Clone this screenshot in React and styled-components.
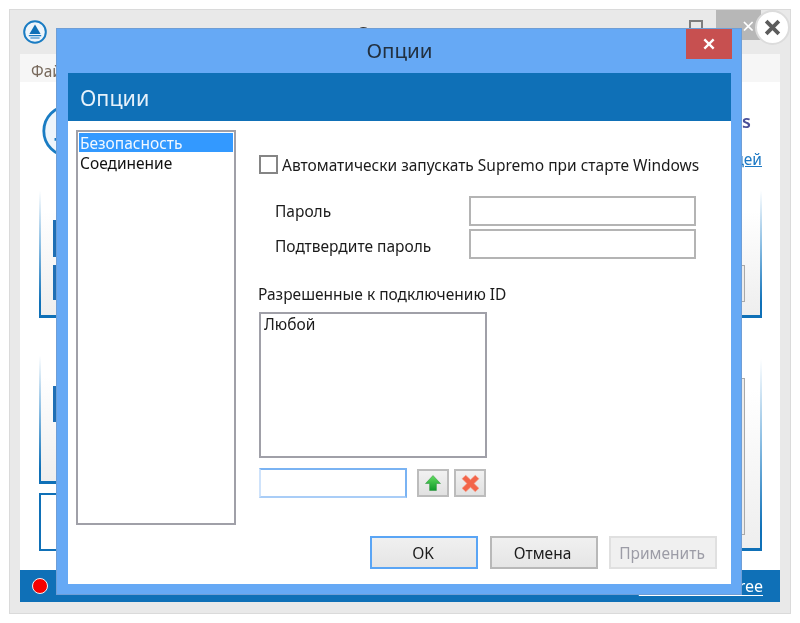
import React from 'react'
import styled, { createGlobalStyle } from 'styled-components'

const GlobalStyle = createGlobalStyle`
html, body {
    margin: 0;
    padding: 0;
    background: #fff;
    font-family: "Noto Sans", "Open Sans", sans-serif;
    font-size: 15.5px;
    color: #1b1b1b;
}
* {
    box-sizing: border-box;
}
`

const Screen = styled.div`
position: relative;
width: 800px;
height: 623px;
padding: 9px;
overflow: hidden;
filter: blur(0.55px);
`

/* window behind the dialog */
const Window = styled.div`
width: 782px;
height: 605px;
display: flex;
flex-direction: column;
padding: 0 10px 11px 10px;
background: #e9e9e9;
border: 1px solid #dadada;
`
const TitleBar = styled.div`
height: 44px;
display: grid;
grid-template-columns: 1fr auto 1fr;
`
const AppLogo = styled.div`
padding: 10px 0 0 3px;
`
const Caption = styled.div`
padding-top: 10px;
font-size: 20px;
color: #333;
`
const Controls = styled.div`
display: flex;
justify-content: flex-end;
align-items: flex-start;
gap: 13px;
margin-right: 19px;
`
const RestoreButton = styled.div`
width: 14px;
height: 14px;
margin-top: 10px;
border: 2px solid #7d7d7d;
`
const CloseButton = styled.div`
width: 45px;
height: 30px;
padding: 2px 0 0 26px;
background: #b7b7b7;
color: #fff;
font-size: 22px;
line-height: 26px;
`
const MenuBar = styled.div`
height: 28px;
padding: 6px 0 0 11px;
background: #f6f6f6;
color: #77695c;
`
const Panel = styled.div`
flex: 1;
display: flex;
flex-direction: column;
background: #fff;
padding: 0 18px 0 19px;
`
const PanelHead = styled.div`
height: 103px;
display: flex;
justify-content: space-between;
`
const BigLogo = styled.div`
padding: 21px 0 0 2px;
`
const HeadLinks = styled.div`
display: flex;
flex-direction: column;
align-items: flex-end;
padding-top: 27px;
`
const HeadTitle = styled.div`
margin-right: 11px;
font-size: 18px;
line-height: 24px;
font-weight: 600;
color: #4a4f98;
`
const HeadLink = styled.a`
margin-top: 16px;
color: #1b78c4;
line-height: 20px;
text-decoration: underline;
`
const Columns = styled.div`
display: grid;
grid-template-columns: 1fr 1fr;
column-gap: 12px;
`
const Column = styled.div`
display: flex;
flex-direction: column;
`
const Group = styled.div`
height: ${props => props.$height}px;
margin-top: ${props => props.$top || 0}px;
padding: ${props => props.$pad || 35}px 15px 0 12px;
background: linear-gradient(#fff 20%, #eeeeee);
border-style: solid;
border-width: 0 2px 3px 2px;
border-image: linear-gradient(rgba(15, 112, 183, 0) 5%, #8fc0e4 45%, #0f70b7 90%) 1;
`
const PlainGroup = styled.div`
height: 58px;
margin-top: 9px;
border: 2px solid #0f70b7;
`
const Field = styled.div`
height: ${props => props.$height}px;
margin-bottom: 8px;
border-left: 3px solid #1f6fb5;
`
const SideBox = styled.div`
height: ${props => props.$height}px;
margin-top: ${props => props.$top}px;
background: #ececec;
border: 1px solid #a9a9a9;
`
const StatusBar = styled.div`
height: 32px;
display: flex;
justify-content: space-between;
align-items: center;
padding: 0 17px 0 12px;
background: #0f70b7;
`
const StatusDot = styled.div`
width: 16px;
height: 16px;
border-radius: 50%;
background: #f50000;
border: 1.5px solid #f4f4f4;
`
const StatusLink = styled.a`
color: #fff;
font-size: 16px;
text-decoration: underline;
text-underline-offset: 3px;
`

/* round close badge on the corner of the screenshot */
const RoundClose = styled.div`
position: absolute;
left: 755px;
top: 10px;
width: 35px;
height: 35px;
display: flex;
align-items: center;
justify-content: center;
border-radius: 50%;
background: #fff;
border: 2px solid #dcdcdc;
`

/* options dialog */
const Dialog = styled.div`
position: absolute;
left: 56px;
top: 28px;
width: 686px;
height: 567px;
display: flex;
flex-direction: column;
padding: 0 10px 10px 11px;
background: #66a9f5;
border: 1px solid #6f9ed6;
`
const DialogBar = styled.div`
height: 44px;
flex: none;
display: grid;
grid-template-columns: 1fr auto 1fr;
align-items: start;
`
const DialogCaption = styled.div`
padding-top: 6px;
font-size: 20.5px;
line-height: 30px;
color: #22303f;
`
const DialogClose = styled.div`
justify-self: end;
width: 46px;
height: 30px;
margin-right: -1px;
display: flex;
align-items: center;
justify-content: center;
background: #c75050;
`
const DialogBody = styled.div`
flex: 1;
display: flex;
flex-direction: column;
background: #fff;
`
const DialogHeader = styled.div`
height: 48px;
padding-left: 12px;
background: #0f70b7;
color: #e6f1fa;
font-size: 21.5px;
line-height: 49px;
`
const Content = styled.div`
display: flex;
gap: 23px;
padding: 9px 0 0 8px;
`
const CategoryList = styled.div`
width: 160px;
height: 395px;
padding: 1px;
border: 2px solid #a0a0a8;
`
const Category = styled.div`
height: 19px;
padding-left: 1px;
line-height: 21px;
color: ${props => (props.$selected ? '#f2f8ff' : '#111')};
background: ${props => (props.$selected ? '#3399ff' : 'transparent')};
margin-bottom: 1px;
`
const Settings = styled.div`
display: flex;
flex-direction: column;
padding-top: 25px;
`
const CheckRow = styled.label`
display: flex;
align-items: center;
gap: 4px;
height: 19px;
white-space: nowrap;
`
const CheckBox = styled.span`
flex: none;
width: 19px;
height: 19px;
border: 2px solid #858585;
`
const PasswordGrid = styled.div`
display: grid;
grid-template-columns: 194px 227px;
grid-auto-rows: 30px;
row-gap: 3px;
align-items: center;
margin-top: 22px;
padding-left: 16px;
`
const FieldLabel = styled.span`
padding-top: ${props => props.$shift || 0}px;
`
const TextBox = styled.div`
height: 30px;
background: #fff;
border: 2px solid #b4b4b4;
`
const SectionLabel = styled.div`
margin: 25px 0 8px -1px;
line-height: 20px;
`
const AllowedList = styled.div`
width: 228px;
height: 146px;
padding: 0 3px;
border: 2px solid #a0a0a8;
line-height: 20px;
`
const AddRow = styled.div`
display: flex;
align-items: center;
margin-top: 10px;
`
const AddInput = styled.div`
width: 148px;
height: 30px;
border: 2px solid #7ab3f3;
border-left-color: #cfe3fb;
border-bottom-color: #a9cdf7;
`
const IconButton = styled.div`
width: 32px;
height: 28px;
margin-left: ${props => props.$gap}px;
display: flex;
align-items: center;
justify-content: center;
background: linear-gradient(#f1f1f1, #e1e1e1);
border: 2px solid #bcbcbc;
`
const Footer = styled.div`
display: flex;
justify-content: flex-end;
gap: 11.5px;
margin-top: 11px;
padding-right: 14px;
`
const Button = styled.div`
width: 108px;
height: 33px;
padding-right: 2px;
text-align: center;
line-height: 30px;
background: ${props => (props.$disabled ? '#f0f0f0' : 'linear-gradient(#f0f0f0, #e5e5e5)')};
color: ${props => (props.$disabled ? '#9c9ca6' : '#1b1b1b')};
border: 2px solid ${props => (props.$primary ? '#5aa5f5' : props.$disabled ? '#e0e0e0' : '#b8b8b8')};
`

const SupremoLogo = ({ size, ring }) => (
    <svg width={size} height={size} viewBox="0 0 24 24">
        <circle cx="12" cy="12" r="10.8" fill="#eef5fb" stroke="#1a7cc3" strokeWidth={ring} />
        <path d="M12 4.5 L17.6 14 H6.4 Z" fill="#0f70b7" />
        <path d="M5.8 15.6 H18.2 M7.4 18 H16.6" stroke="#1a7cc3" strokeWidth="1.1" />
    </svg>
)

const Cross = ({ size, color, width }) => (
    <svg width={size} height={size} viewBox="0 0 12 12">
        <path d="M2 2 L10 10 M10 2 L2 10" stroke={color} strokeWidth={width} fill="none" />
    </svg>
)

const GreenArrow = () => (
    <svg width="18" height="18" viewBox="0 0 18 18">
        <defs>
            <linearGradient id="arrow" x1="0" y1="0" x2="0" y2="1">
                <stop offset="0" stopColor="#62dc5f" />
                <stop offset="1" stopColor="#0f9a2a" />
            </linearGradient>
        </defs>
        <path d="M9 1.5 L16.5 9.5 H12.4 V16.5 H5.6 V9.5 H1.5 Z" fill="url(#arrow)" stroke="#2b8f3a" strokeWidth="0.5" />
    </svg>
)

const RedCross = () => (
    <svg width="19" height="19" viewBox="0 0 18 18">
        <path d="M4.5 1.2 L9 5.4 L13.5 1.2 L17 4.4 L12.4 9 L17 13.6 L13.5 16.8 L9 12.6 L4.5 16.8 L1 13.6 L5.6 9 L1 4.4 Z" fill="#f2654a" stroke="#f8a08c" strokeWidth="0.6" />
    </svg>
)

const BackgroundWindow = () => (
    <Window>
        <TitleBar>
            <AppLogo><SupremoLogo size={24} ring={2} /></AppLogo>
            <Caption>Supremo</Caption>
            <Controls>
                <RestoreButton />
                <CloseButton>×</CloseButton>
            </Controls>
        </TitleBar>
        <MenuBar>Файл</MenuBar>
        <Panel>
            <PanelHead>
                <BigLogo><SupremoLogo size={56} ring={1.2} /></BigLogo>
                <HeadLinks>
                    <HeadTitle>News</HeadTitle>
                    <HeadLink>Идей</HeadLink>
                </HeadLinks>
            </PanelHead>
            <Columns>
                <Column>
                    <Group $height={133}>
                        <Field $height={37} />
                        <Field $height={35} />
                    </Group>
                    <Group $height={134} $top={32} $pad={36}>
                        <Field $height={36} />
                    </Group>
                    <PlainGroup />
                </Column>
                <Column>
                    <Group $height={133}>
                        <SideBox $height={37} $top={45} />
                    </Group>
                    <Group $height={201} $top={32} $pad={28}>
                        <SideBox $height={157} $top={0} />
                    </Group>
                </Column>
            </Columns>
        </Panel>
        <StatusBar>
            <StatusDot />
            <StatusLink>Download it free</StatusLink>
        </StatusBar>
    </Window>
)

const OptionsDialog = () => (
    <Dialog>
        <DialogBar>
            <span />
            <DialogCaption>Опции</DialogCaption>
            <DialogClose><Cross size={14} color="#fff" width={2} /></DialogClose>
        </DialogBar>
        <DialogBody>
            <DialogHeader>Опции</DialogHeader>
            <Content>
                <CategoryList>
                    <Category $selected>Безопасность</Category>
                    <Category>Соединение</Category>
                </CategoryList>
                <Settings>
                    <CheckRow>
                        <CheckBox />
                        Автоматически запускать Supremo при старте Windows
                    </CheckRow>
                    <PasswordGrid>
                        <FieldLabel>Пароль</FieldLabel>
                        <TextBox />
                        <FieldLabel $shift={4}>Подтвердите пароль</FieldLabel>
                        <TextBox />
                    </PasswordGrid>
                    <SectionLabel>Разрешенные к подключению ID</SectionLabel>
                    <AllowedList>Любой</AllowedList>
                    <AddRow>
                        <AddInput />
                        <IconButton $gap={10}><GreenArrow /></IconButton>
                        <IconButton $gap={5}><RedCross /></IconButton>
                    </AddRow>
                </Settings>
            </Content>
            <Footer>
                <Button $primary>OK</Button>
                <Button>Отмена</Button>
                <Button $disabled>Применить</Button>
            </Footer>
        </DialogBody>
    </Dialog>
)

const App = () => {
    return (
        <Screen>
            <GlobalStyle />
            <BackgroundWindow />
            <OptionsDialog />
            <RoundClose><Cross size={19} color="#5c5c5c" width={2.4} /></RoundClose>
        </Screen>
    )
}

export default App
